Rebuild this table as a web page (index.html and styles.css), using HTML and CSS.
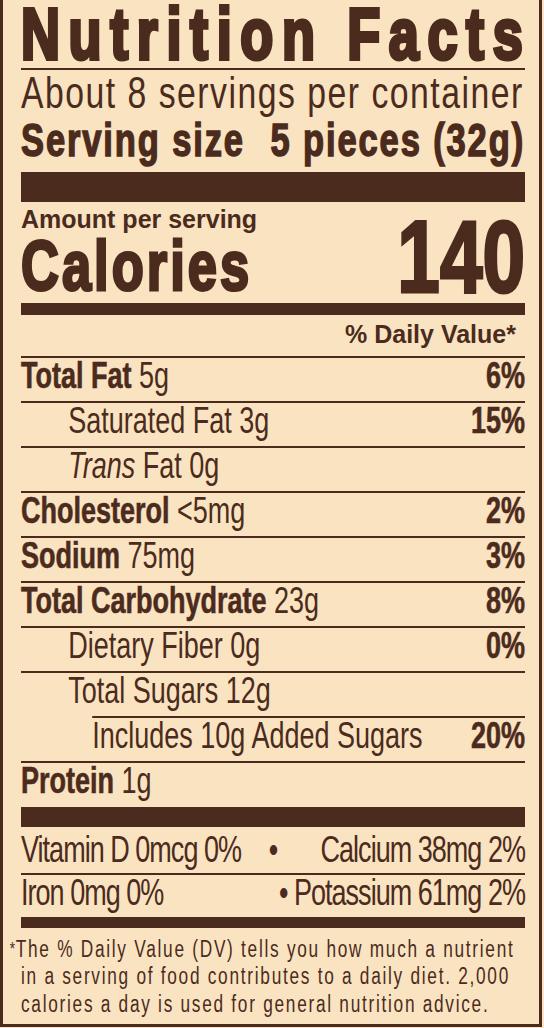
FILE: index.html
```html
<!DOCTYPE html>
<html>
  <head>
    <title>Nutrition Facts</title>
    <link rel="stylesheet" href="styles.css">
  </head>
  <body>
    <div class="label">
      <div class="inner">
        <h1 class="title">Nutrition Facts</h1>
        <div class="servings">About 8 servings per container</div>
        <div class="serving-size">
          <span>Serving size</span>
          <span>5 pieces (32g)</span>
        </div>

        <div class="bar bar-thick"></div>

        <div class="cal-block">
          <div>
            <div class="amount">Amount per serving</div>
            <div class="calories">Calories</div>
          </div>
          <div class="cal-value">140</div>
        </div>

        <div class="bar bar-mid"></div>

        <div class="dv-head"><span>% Daily Value*</span></div>

        <div class="row"><span><b>Total Fat</b> 5g</span><b>6%</b></div>
        <div class="row indent"><span>Saturated Fat 3g</span><b>15%</b></div>
        <div class="row indent"><span><i>Trans</i> Fat 0g</span></div>
        <div class="row"><span><b>Cholesterol</b> &lt;5mg</span><b>2%</b></div>
        <div class="row"><span><b>Sodium</b> 75mg</span><b>3%</b></div>
        <div class="row"><span><b>Total Carbohydrate</b> 23g</span><b>8%</b></div>
        <div class="row indent"><span>Dietary Fiber 0g</span><b>0%</b></div>
        <div class="row indent no-line"><span>Total Sugars 12g</span></div>
        <div class="row-wrap">
          <div class="row added"><span>Includes 10g Added Sugars</span><b>20%</b></div>
        </div>
        <div class="row no-line"><span><b>Protein</b> 1g</span></div>

        <div class="bar bar-low"></div>

        <div class="minerals vit">
          <span>Vitamin D 0mcg 0%</span>
          <span class="dot">•</span>
          <span class="right">Calcium 38mg 2%</span>
        </div>
        <div class="minerals iron">
          <span>Iron 0mg 0%</span>
          <span>• Potassium 61mg 2%</span>
        </div>

        <div class="bar bar-thin"></div>

        <p class="footnote">
          <span class="star">*</span>The % Daily Value (DV) tells you how much a nutrient<br>
          in a serving of food contributes to a daily diet. 2,000<br>
          calories a day is used for general nutrition advice.
        </p>
      </div>
    </div>
  </body>
</html>
```

FILE: styles.css
```css
body {
  margin: 0;
  background: #fae3c0;
  color: #4b2b1d;
  font-family: 'Liberation Sans', Arial, sans-serif;
}

/* outer frame keeps the real width; inner column is squeezed to mimic a condensed face */
.label {
  width: 542px;
  height: 1027px;
  box-sizing: border-box;
  padding: 0 14px 0 18px;
  border-left: 3px solid #4b2b1d;
  border-right: 3px solid #4b2b1d;
  border-bottom: 3px solid #4b2b1d;
  overflow: hidden;
}

.inner {
  width: 672px;
  transform: scaleX(0.75);
  transform-origin: left top;
}

.title {
  margin: 0;
  font-size: 72px;
  line-height: 68px;
  font-weight: 700;
  letter-spacing: 11.5px;
  white-space: nowrap;
  -webkit-text-stroke: 4px #4b2b1d;
  border-bottom: 2px solid #4b2b1d;
}

.servings {
  font-size: 45px;
  line-height: 46px;
  letter-spacing: 2px;
  white-space: nowrap;
}

.serving-size {
  display: flex;
  justify-content: space-between;
  font-size: 46px;
  line-height: 48px;
  font-weight: 700;
  letter-spacing: 2.5px;
  white-space: nowrap;
  -webkit-text-stroke: 1.5px #4b2b1d;
}

.bar {
  background: #4b2b1d;
}

.bar-thick {
  height: 30px;
  margin-top: 8px;
}

.bar-mid {
  height: 12px;
  margin-top: 8px;
}

.bar-low {
  height: 20px;
  margin-top: 1px;
}

.bar-thin {
  height: 11px;
}

.cal-block {
  display: flex;
  justify-content: space-between;
  align-items: flex-end;
  height: 93px;
}

/* these two headings use the regular-width face, so undo the squeeze */
.amount {
  font-size: 25px;
  line-height: 35px;
  font-weight: 700;
  white-space: nowrap;
  transform: scaleX(1.3333);
  transform-origin: left;
}

.calories {
  font-size: 70px;
  line-height: 58px;
  font-weight: 700;
  letter-spacing: 4px;
  -webkit-text-stroke: 3px #4b2b1d;
}

.cal-value {
  font-size: 102px;
  line-height: 76px;
  font-weight: 700;
  -webkit-text-stroke: 3px #4b2b1d;
}

.dv-head {
  display: flex;
  justify-content: flex-end;
  font-size: 25px;
  line-height: 39px;
  font-weight: 700;
  padding: 0 12px 2px 0;
  border-bottom: 2px solid #4b2b1d;
}

.dv-head span {
  transform: scaleX(1.3333);
  transform-origin: right;
  white-space: nowrap;
}

.row {
  display: flex;
  justify-content: space-between;
  font-size: 36px;
  line-height: 35px;
  padding-bottom: 8px;
  white-space: nowrap;
  border-bottom: 2px solid #4b2b1d;
}

.row b {
  font-weight: 700;
  -webkit-text-stroke: 0.6px #4b2b1d;
}

.indent {
  padding-left: 63px;
}

.no-line {
  border-bottom: none;
}

.row-wrap {
  border-bottom: 2px solid #4b2b1d;
}

.added {
  margin-left: 95px;
  padding-left: 0;
  border-bottom: none;
  border-top: 2px solid #4b2b1d;
}

.minerals {
  font-size: 36px;
  letter-spacing: -1.3px;
  white-space: nowrap;
}

.vit {
  display: grid;
  grid-template-columns: 1fr auto 1fr;
  line-height: 46px;
  border-bottom: 2px solid #4b2b1d;
}

.vit .right {
  justify-self: end;
}

.iron {
  display: flex;
  justify-content: space-between;
  line-height: 36px;
  padding-bottom: 6px;
}

.footnote {
  margin: 0;
  padding: 7.5px 0 0;
  font-size: 23px;
  line-height: 27.5px;
  letter-spacing: 2.3px;
  white-space: nowrap;
  text-indent: -15px;
}

.star {
  font-size: 18px;
  vertical-align: top;
  letter-spacing: 1px;
}
```
